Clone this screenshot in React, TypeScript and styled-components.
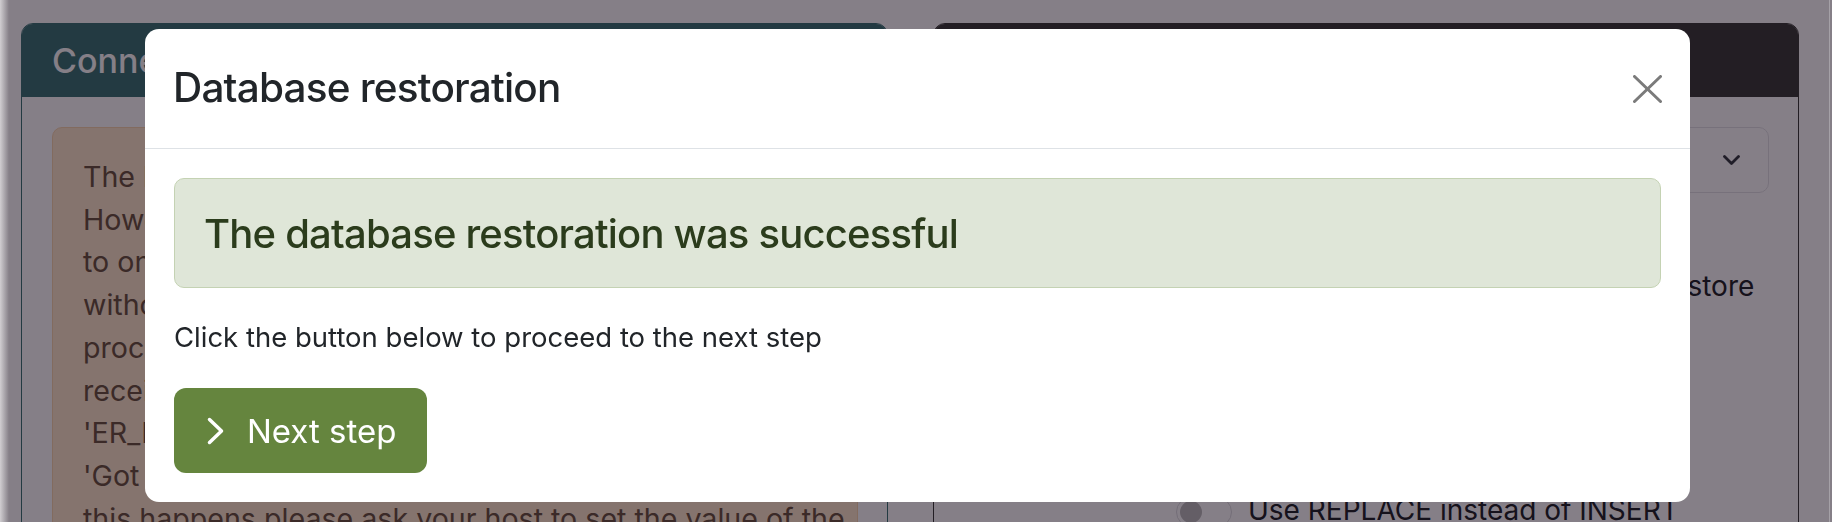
import styled, { createGlobalStyle } from 'styled-components';

const GlobalStyle = createGlobalStyle`
    html, body {
        margin: 0;
        padding: 0;
        overflow: hidden;
        background: #fff;
    }
    body {
        font-family: Inter, "Liberation Sans", sans-serif;
        color: #212529;
    }
    * {
        box-sizing: border-box;
    }
`

// --- page behind the modal ---

const Page = styled.div`
    display: grid;
    grid-template-columns: 867px 866px;
    column-gap: 45px;
    align-items: start;
    width: 1832px;
    height: 522px;
    padding: 23px 0 0 21px;
    overflow: hidden;
`

const Card = styled.section<{ $tone: string }>`
    border: 1px solid ${p => p.$tone};
    border-radius: 12px;
    overflow: hidden;
    height: 640px;
    background: #fff;
`

const CardHeader = styled.header<{ $tone: string }>`
    height: 73px;
    display: flex;
    align-items: center;
    padding: 0 30px;
    background: ${p => p.$tone};
    color: #fff;
    font-size: 34px;
    font-weight: 500;
`

const CardBody = styled.div`
    padding: 30px 29px 30px 30px;
`

const WarningAlert = styled.div`
    border: 1px solid #f8d6ae;
    border-radius: 10px;
    background: #fee8cc;
    color: #6a5440;
    padding: 28px 30px;
    font-size: 28.6px;
    line-height: 42.7px;
    white-space: nowrap;
`

const Select = styled.div`
    height: 66px;
    display: flex;
    align-items: center;
    justify-content: space-between;
    padding: 0 28px 0 24px;
    border: 1px solid #e2e2e6;
    border-radius: 10px;
    font-size: 28px;
    color: #212529;
`

const OptionsBlock = styled.div`
    display: flex;
    flex-direction: column;
    gap: 27px;
    margin-top: 72px;
    padding-left: 212px;
`

const OptionRow = styled.label`
    display: flex;
    align-items: flex-start;
    gap: 16px;
    font-size: 28px;
    line-height: 42.5px;
    color: #212529;
    white-space: nowrap;
`

const Switch = styled.span`
    flex: none;
    display: flex;
    align-items: center;
    width: 56px;
    height: 30px;
    margin-top: 8px;
    padding: 0 3px;
    border: 1px solid #dcdce0;
    border-radius: 15px;
`

const Knob = styled.span`
    width: 22px;
    height: 22px;
    border-radius: 50%;
    background: #bdbdbd;
`

// --- modal layers ---

const Backdrop = styled.div`
    position: fixed;
    inset: 0;
    background: rgba(12, 0, 16, 0.5);
`

const WindowEdge = styled.div<{ $side: 'left' | 'right' }>`
    position: fixed;
    top: 0;
    bottom: 0;
    ${p => p.$side === 'left'
        ? 'left: 0; width: 9px; background: linear-gradient(to right, rgba(222,220,222,0.85), rgba(222,220,222,0));'
        : 'right: 2px; width: 1px; background: #a5a1a7;'}
`

const ModalLayer = styled.div`
    position: fixed;
    inset: 0;
    display: flex;
    justify-content: center;
    align-items: flex-start;
    padding: 29px 0 0 3px;
`

const Dialog = styled.div`
    width: 1545px;
    background: #fff;
    border-radius: 14px;
    overflow: hidden;
`

const DialogHeader = styled.div`
    height: 120px;
    display: flex;
    align-items: center;
    justify-content: space-between;
    padding: 0 28px;
    border-bottom: 1px solid #dee2e6;
`

const DialogTitle = styled.h5`
    margin: 0;
    font-size: 40.5px;
    font-weight: 500;
    letter-spacing: -0.02em;
    line-height: 1.2;
    color: #212529;
`

const CloseButton = styled.button`
    display: flex;
    padding: 0;
    border: 0;
    background: none;
    color: #7b7b7b;
`

const DialogBody = styled.div`
    padding: 29px 29px 29px;
`

const SuccessAlert = styled.div`
    height: 110px;
    display: flex;
    align-items: center;
    padding: 0 29px;
    border: 1px solid #c4d2b3;
    border-radius: 10px;
    background: #dfe6d8;
`

const AlertHeading = styled.h4`
    margin: 0;
    font-size: 40px;
    font-weight: 500;
    letter-spacing: -0.02em;
    color: #2b3c1c;
`

const Lead = styled.p`
    margin: 27px 0 29px;
    font-size: 27.5px;
    line-height: 44px;
    color: #212529;
`

const NextButton = styled.button`
    display: inline-flex;
    align-items: center;
    gap: 23px;
    height: 85px;
    padding: 0 31px 0 33px;
    border: 0;
    border-radius: 12px;
    background: #65853e;
    color: #fff;
    font-family: inherit;
    font-size: 33px;
`

function App() {
    return (
        <>
            <GlobalStyle />
            <Page>
                <Card $tone="#3a7474">
                    <CardHeader $tone="#3a7474">Connection information</CardHeader>
                    <CardBody>
                        <WarningAlert>
                            The backup you are restoring contains very large rows.<br />
                            However, your MySQL server only accepts queries up<br />
                            to one megabyte. Restoring large rows may not work<br />
                            without changing that limit. If you choose to<br />
                            proceed with the restoration anyway you may<br />
                            receive an error message similar to<br />
                            'ER_NET_PACKET_TOO_LARGE' or<br />
                            'Got a packet bigger than max_allowed_packet'. If<br />
                            this happens please ask your host to set the value of the<br />
                            max_allowed_packet setting to a higher value.
                        </WarningAlert>
                    </CardBody>
                </Card>
                <Card $tone="#3a3c38">
                    <CardHeader $tone="#3a3c38">Restoration options</CardHeader>
                    <CardBody>
                        <Select>
                            <span>All database tables</span>
                            <svg width="17" height="10" viewBox="0 0 17 10" fill="none" stroke="#343a40" strokeWidth="2.8" strokeLinecap="round" strokeLinejoin="round">
                                <polyline points="1.5,1.5 8.5,8.5 15.5,1.5" />
                            </svg>
                        </Select>
                        <OptionsBlock>
                            <OptionRow>
                                <Switch><Knob /></Switch>
                                <span>Drop the existing tables first to restore<br />them from the backup archive</span>
                            </OptionRow>
                            <OptionRow>
                                <Switch><Knob /></Switch>
                                <span>Skip tables already present<br />in the target database</span>
                            </OptionRow>
                            <OptionRow>
                                <Switch><Knob /></Switch>
                                <span>Use REPLACE instead of INSERT</span>
                            </OptionRow>
                        </OptionsBlock>
                    </CardBody>
                </Card>
            </Page>

            <Backdrop />
            <WindowEdge $side="left" />
            <WindowEdge $side="right" />

            <ModalLayer>
                <Dialog>
                    <DialogHeader>
                        <DialogTitle>Database restoration</DialogTitle>
                        <CloseButton aria-label="Close">
                            <svg width="29" height="28" viewBox="0 0 29 28" fill="none" stroke="currentColor" strokeWidth="3" strokeLinecap="round">
                                <line x1="1.5" y1="1.5" x2="27.5" y2="26.5" />
                                <line x1="27.5" y1="1.5" x2="1.5" y2="26.5" />
                            </svg>
                        </CloseButton>
                    </DialogHeader>
                    <DialogBody>
                        <SuccessAlert>
                            <AlertHeading>The database restoration was successful</AlertHeading>
                        </SuccessAlert>
                        <Lead>Click the button below to proceed to the next step</Lead>
                        <NextButton>
                            <svg width="17" height="28" viewBox="0 0 17 28" fill="none" stroke="currentColor" strokeWidth="3.5" strokeLinecap="round" strokeLinejoin="round">
                                <polyline points="2.5,2.5 14.5,14 2.5,25.5" />
                            </svg>
                            Next step
                        </NextButton>
                    </DialogBody>
                </Dialog>
            </ModalLayer>
        </>
    );
}

export default App;
